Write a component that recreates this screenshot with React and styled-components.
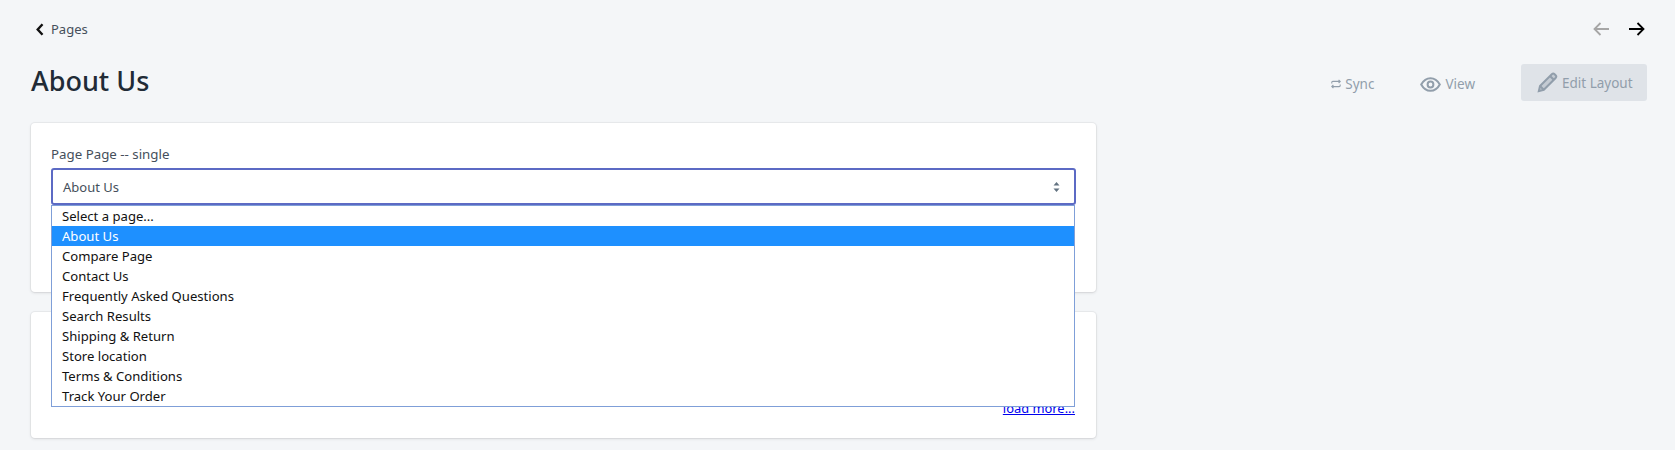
import React from "react";
import styled, { createGlobalStyle } from "styled-components";

const Global = createGlobalStyle`
  html, body { margin: 0; padding: 0; background: #f4f6f8; }
  body { font-family: "Noto Sans", "Open Sans", sans-serif; color: #212b36; }
`;
const Page = styled.div`
  width: 1675px; height: 450px; overflow: hidden; box-sizing: border-box;
  padding: 19px 28px 0 31px;
`;
const TopBar = styled.div`
  display: flex; justify-content: space-between; align-items: center; height: 20px;
`;
const Back = styled.a`
  display: flex; align-items: center; gap: 7px; margin-left: 5px;
  font-size: 13px; color: #454f5b; line-height: 20px;
`;
const Pager = styled.div`
  display: flex; gap: 20px; margin-right: 2px; align-items: center;
`;
const Header = styled.div`
  display: flex; justify-content: space-between; align-items: center;
  margin-top: 25px; height: 37px;
`;
const Title = styled.h1`
  margin: 0 0 3px; font-size: 27px; font-weight: 500; line-height: 32px; color: #212b36;
`;
const Actions = styled.div`display: flex; align-items: center;`;
const Action = styled.span`
  display: flex; align-items: center; gap: ${p => p.$gap}px; margin-right: ${p => p.$mr}px;
  font-size: 13.5px; color: #919eab; padding-top: 3px;
`;
const EditButton = styled.button`
  display: flex; align-items: center; gap: 4px; box-sizing: border-box;
  width: 126px; height: 37px; padding: 0 0 0 16px; border: 0; border-radius: 3px;
  background: #dfe3e8; color: #919eab; font: inherit; font-size: 13.5px;
`;
const Card = styled.section`
  position: relative; box-sizing: border-box; width: 1065px; background: #fff;
  border-radius: 4px; height: ${p => p.$h}px; margin-top: ${p => p.$mt}px; padding: 20px;
  box-shadow: 0 0 0 1px rgba(63,63,68,.05), 0 1px 3px 0 rgba(63,63,68,.15);
`;
const Label = styled.label`
  display: block; font-size: 13.3px; line-height: 20px; color: #454f5b; margin-top: 1px; height: 24px;
`;
const SelectBox = styled.div`
  display: flex; align-items: center; justify-content: space-between; box-sizing: border-box;
  height: 37px; width: 1025px; padding: 0 14px 0 10px; border: 2px solid #5c6ac4;
  border-radius: 3px; font-size: 13px; color: #454f5b; background: #fff;
`;
const Menu = styled.ul`
  position: absolute; z-index: 2; left: 20px; top: 82px; box-sizing: content-box;
  width: 1022px; margin: 0; padding: 0; list-style: none; background: #fff;
  border: 1px solid #7f9fd8; font-size: 13.1px; color: #111;
`;
const Option = styled.li`
  height: 20px; line-height: 20px; padding-left: 10px;
  background: ${p => (p.$active ? "#1e90ff" : "transparent")};
  color: ${p => (p.$active ? "#fff" : "#111")};
`;
const LoadMore = styled.a`
  position: absolute; right: 21px; top: 87px; font-size: 12.9px; line-height: 18px;
  color: #0000ee; text-decoration: underline;
`;

const options = ["Select a page...", "About Us", "Compare Page", "Contact Us", "Frequently Asked Questions", "Search Results", "Shipping & Return", "Store location", "Terms & Conditions", "Track Your Order"];

const Arrow = ({ dir, color }) => (
  <svg width="16" height="14" viewBox="0 0 16 14" fill="none" stroke={color} strokeWidth="1.8">
    {dir === "left" ? <path d="M16 7H1.500M7.500 1 1.500 7l6 6" /> : <path d="M0 7h14.500M8.500 1l6 6-6 6" />}
  </svg>
);

export default function App() {
  return (
    <Page>
      <Global />
      <TopBar>
        <Back>
          <svg width="8" height="13" viewBox="0 0 8 13" fill="none" stroke="#111" strokeWidth="2.4"><path d="M6.500 1.200 1.700 6.500l4.800 5.300" /></svg>
          Pages
        </Back>
        <Pager>
          <Arrow dir="left" color="#a6a6a6" />
          <Arrow dir="right" color="#000" />
        </Pager>
      </TopBar>
      <Header>
        <Title>About Us</Title>
        <Actions>
          <Action $gap={4} $mr={46}>
            <svg width="10" height="10" viewBox="0 0 10 10" fill="none" stroke="#919eab" strokeWidth="1.1">
              <path d="M.8 4.6V3.4a1 1 0 0 1 1-1h7M7.6.8l1.6 1.6L7.6 4M9.2 5.400v1.200a1 1 0 0 1-1 1H.8M2.400 9.200.8 7.600 2.400 6" />
            </svg>
            Sync
          </Action>
          <Action $gap={4} $mr={46}>
            <svg width="21" height="15" viewBox="0 0 21 15" fill="none" stroke="#919eab" strokeWidth="2">
              <path d="M1.200 7.500C3.400 3.500 6.600 1.200 10.500 1.200s7.100 2.300 9.300 6.300c-2.200 4-5.400 6.300-9.300 6.300S3.400 11.500 1.200 7.500Z" />
              <circle cx="10.500" cy="7.500" r="2.900" />
            </svg>
            View
          </Action>
          <EditButton>
            <svg width="21" height="21" viewBox="0 0 21 21" fill="none" stroke="#919eab" strokeWidth="2">
              <path d="M1.800 19.200 3 14 14.800 2.200a2 2 0 0 1 2.800 0l1 1a2 2 0 0 1 0 2.800L6.800 17.800Z" fill="#919eab" fillOpacity=".35" />
              <path d="M13 4l4 4M3 14l4 4" />
            </svg>
            Edit Layout
          </EditButton>
        </Actions>
      </Header>
      <Card $h={169} $mt={22}>
        <Label>Page Page -- single</Label>
        <SelectBox>
          About Us
          <svg width="7" height="10" viewBox="0 0 7 10" fill="#637381"><path d="M3.500 0 6.500 3.500H.500ZM3.500 10 .500 6.500h6Z" /></svg>
        </SelectBox>
        <Menu>
          {options.map(o => <Option key={o} $active={o === "About Us"}>{o}</Option>)}
        </Menu>
      </Card>
      <Card $h={126} $mt={20}>
        <LoadMore>load more...</LoadMore>
      </Card>
    </Page>
  );
}
